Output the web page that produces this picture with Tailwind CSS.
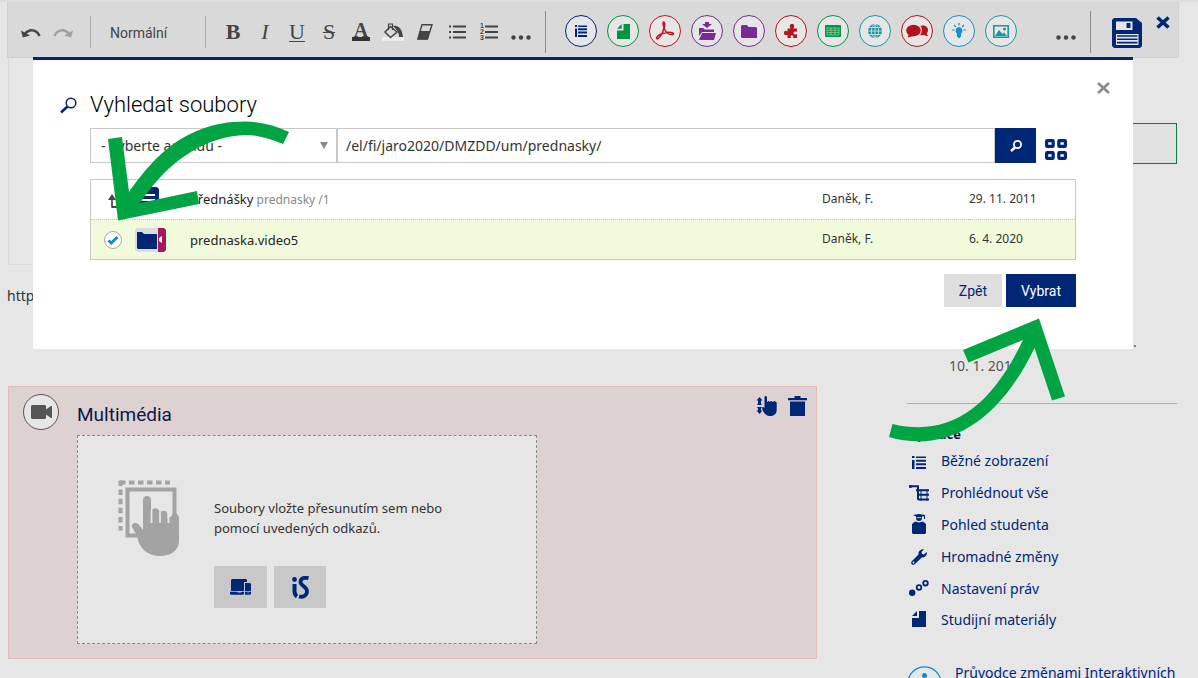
<!DOCTYPE html>
<html lang="cs">
<head>
<meta charset="utf-8">
<meta name="viewport" content="width=device-width, initial-scale=1">
<title>Vyhledat soubory</title>
<script src="https://cdn.jsdelivr.net/npm/@tailwindcss/browser@4"></script>
</head>
<body class="relative h-screen overflow-hidden border-t-2 border-[#dedede] bg-[#e6e6e6] font-['Noto_Sans','Open_Sans',sans-serif] text-sm text-[#333]">

<!-- Editor toolbar -->
<header class="mr-[19px] ml-[7px] flex h-14 border border-t-0 border-[#d0d0d0] bg-[#d9d9d9] pl-[7px] pr-2 text-[#444]">
  <div class="flex h-[60px] items-center">
    <button aria-label="Zpět" class="flex w-8 justify-center pt-1"><svg width="20" height="12" viewBox="0 0 20 12"><path d="M3.5 6.5C8 .5 15.500 1 18.500 8" fill="none" stroke="#444" stroke-width="2.500"/><path d="M0 2.500 1.800 9.500 9 7.500Z" fill="#444"/></svg></button>
    <button aria-label="Znovu" class="flex w-8 justify-center pt-1"><svg width="20" height="12" viewBox="0 0 20 12"><path d="M16.500 6.500C12 .5 4.500 1 1.500 8" fill="none" stroke="#a0a0a0" stroke-width="2.500"/><path d="M20 2.500 18.200 9.500 11 7.500Z" fill="#a0a0a0"/></svg></button>
    <span class="ml-[11px] h-8 w-px bg-[#b0b0b0]"></span>
    <select aria-label="Styl odstavce" class="w-[114px] appearance-none pt-[2px] pl-[19px] font-[Roboto,sans-serif] text-sm text-[#444]"><option>Normální</option></select>
    <span class="h-8 w-px bg-[#b0b0b0]"></span>
    <div class="ml-[11px] flex items-center font-['Liberation_Serif',serif] text-[22px] leading-8">
      <button aria-label="Tučné" class="w-8 font-bold">B</button>
      <button aria-label="Kurzíva" class="w-8 italic">I</button>
      <button aria-label="Podtržené" class="w-8 underline decoration-1 underline-offset-2">U</button>
      <button aria-label="Přeškrtnuté" class="w-8 line-through decoration-1">S</button>
      <button aria-label="Barva textu" class="flex w-8 justify-center"><span class="h-[18px] w-[18px] border-b-4 border-[#333] text-[20px] leading-[14px] font-bold">A</span></button>
      <button aria-label="Barva pozadí" class="flex w-8 justify-center"><svg width="22" height="18" viewBox="0 0 22 18"><path d="M0 14h22v4H0z" fill="#ececec"/><path d="M8.500 3.500 15 9 8.500 14.500 3 9Z" fill="none" stroke="#444" stroke-width="1.500"/><path d="M6.500 7V1h4v6" fill="none" stroke="#444" stroke-width="1.200"/><path d="M11 3c5-1 9 2 10 11h-4c0-4-1-6-6-11Z" fill="#444"/></svg></button>
      <button aria-label="Odstranit formátování" class="flex w-8 justify-center"><svg width="16" height="16" viewBox="0 0 16 16"><path d="M5 .7h10L10.500 15H.8Z" fill="#d9d9d9" stroke="#444" stroke-width="1.400"/><path d="M3.200 7h9.600L10.500 15.500H.5Z" fill="#444"/></svg></button>
      <button aria-label="Odrážky" class="flex w-8 justify-center"><svg width="18" height="16" viewBox="0 0 18 16" fill="#444"><path d="M5 1.500h13v2H5zM5 7h13v2H5zM5 12.500h13v2H5zM1 1.500h2v2H1zM1 7h2v2H1zM1 12.500h2v2H1z"/></svg></button>
      <button aria-label="Číslování" class="flex w-8 justify-center gap-px font-['Liberation_Sans',sans-serif] text-[7px] leading-[6px] font-bold"><span class="flex w-1 flex-col"><span>1</span><span>2</span><span>3</span></span><svg width="13" height="18" viewBox="0 0 13 18" fill="#444"><path d="M0 2.500h13v2H0zM0 8h13v2H0zM0 13.500h13v2H0z"/></svg></button>
      <button aria-label="Další formátování" class="flex w-8 justify-center pt-[10px]"><svg width="20" height="5" viewBox="0 0 20 5" fill="#444"><circle cx="2.500" cy="2.500" r="2.200"/><circle cx="10" cy="2.500" r="2.200"/><circle cx="17.500" cy="2.500" r="2.200"/></svg></button>
    </div>
    <span class="ml-2 h-[42px] w-px bg-[#8c8c8c]"></span>
  </div>

  <div class="ml-[19px] flex h-[58px] items-center gap-[10px]">
    <button aria-label="Text" class="grid size-8 place-items-center rounded-full border border-[#002776] bg-[#e6e6e6] text-[#002776]"><svg width="12" height="12" viewBox="0 0 12 12" fill="currentColor"><path d="M0 0h2v2H0zM0 3.500h2V12H0zM3 .5h9V2H3zM3 3.300h9v2H3zM3 6.500h9v2H3zM3 10h9v2H3z"/></svg></button>
    <button aria-label="Soubor" class="grid size-8 place-items-center rounded-full border border-[#009640] bg-[#e6e6e6] text-[#009640]"><svg width="13" height="15" viewBox="0 0 14 16" fill="currentColor"><path d="M7 0h7v16H0V7h7ZM5 0v5H0Z"/></svg></button>
    <button aria-label="PDF" class="grid size-8 place-items-center rounded-full border border-[#c0141c] bg-[#e6e6e6] text-[#c0141c]"><svg width="20" height="20" viewBox="0 0 20 20" fill="none" stroke="currentColor" stroke-width="1.500"><path d="M9 1c-2 0-.5 5 1 8 2 3.500 5 5 8 4.500 2-1.500-2-2.500-6-2-5 .5-10 3-10.500 5.500 0 2 3 .5 5.500-4.500C9 8 10.500 2 9 1Z"/></svg></button>
    <button aria-label="Vložit do složky" class="grid size-8 place-items-center rounded-full border border-[#7a2b93] bg-[#e6e6e6] text-[#7a2b93]"><svg width="18" height="18" viewBox="0 0 18 18" fill="currentColor"><path d="M7 0h4v2h3L9 6 4 2h3zM1 6h4l2 1.500h9V10H4l-3 4zM4 11h14l-2 7H1Z"/></svg></button>
    <button aria-label="Složka" class="grid size-8 place-items-center rounded-full border border-[#7a2b93] bg-[#e6e6e6] text-[#7a2b93]"><svg width="16" height="13" viewBox="0 0 16 13" fill="currentColor"><path d="M1 0h5l1.500 2H15l1 1v10H1L0 12V1Z"/></svg></button>
    <button aria-label="Doplněk" class="grid size-8 place-items-center rounded-full border border-[#b5121b] bg-[#e6e6e6] text-[#b5121b]"><svg width="15" height="15" viewBox="0 0 15 15" fill="currentColor"><path d="M3.500 4.500h3.200C5 2 6 0 8 0s3 2 1.300 4.500H13v3.300c-2.500-1-3.500 0-3.500 1.200s1 2 3.500 1.200V14H9c1-2-.2-2.800-1.200-2.800S6 12 7 14H3.500v-3.500C1.500 12 0 11 0 9s1.500-3 3.500-1.500Z"/></svg></button>
    <button aria-label="Tabulka" class="grid size-8 place-items-center rounded-full border border-[#009640] bg-[#e6e6e6] text-[#009640]"><svg width="16" height="12" viewBox="0 0 16 12"><rect width="16" height="12" rx="1" fill="currentColor"/><path d="M2 3h12M2 5.300h12M2 7.600h12M2 10h12M2 2.500V10M6 2.500V10M10 2.500V10M14 2.500V10" stroke="#9fd3b2" stroke-width=".7"/></svg></button>
    <button aria-label="Web" class="grid size-8 place-items-center rounded-full border border-[#1797a0] bg-[#e6e6e6] text-[#1797a0]"><svg width="14" height="14" viewBox="0 0 14 14"><circle cx="7" cy="7" r="7" fill="currentColor"/><path d="M7 0v14M0 7h14M1 3.500h12M1 10.500h12" stroke="#e6e6e6" stroke-width=".8"/><ellipse cx="7" cy="7" rx="3.600" ry="6.500" fill="none" stroke="#e6e6e6" stroke-width=".8"/></svg></button>
    <button aria-label="Diskuse" class="grid size-8 place-items-center rounded-full border border-[#b5121b] bg-[#e6e6e6] text-[#b5121b]"><svg width="22" height="14" viewBox="0 0 22 14" fill="currentColor"><ellipse cx="7.500" cy="6.500" rx="7.300" ry="5.800"/><path d="M3 10 1.500 13.500 8 12ZM14.500 2c4-1.500 7.500 1 7.500 4 0 2-.8 3-1.500 3.800L22 12c-2 0-3-.5-4-1l-4 .2C16.500 8 16.500 4.500 14.500 2Z"/></svg></button>
    <button aria-label="Nápověda" class="grid size-8 place-items-center rounded-full border border-[#0f8fd0] bg-[#e6e6e6] text-[#0f8fd0]"><svg width="14" height="16" viewBox="0 0 14 16"><path d="M7 4a3.600 3.600 0 0 1 2.200 6.300L9 13.500 7 15.500 5 13.500l-.2-3.200A3.600 3.600 0 0 1 7 4Z" fill="currentColor"/><path d="M7 0v2.500M2 2l2 2M12 2l-2 2M0 7h2.500M11.500 7H14" stroke="currentColor" stroke-width="1.200"/></svg></button>
    <button aria-label="Obrázek" class="grid size-8 place-items-center rounded-full border border-[#1797a0] bg-[#e6e6e6] text-[#1797a0]"><svg width="16" height="13" viewBox="0 0 16 13" fill="currentColor"><path d="M.8.800h14.400v11.400H.8Z" fill="none" stroke="currentColor" stroke-width="1.600"/><path d="m2 11 4-6 3.500 4L11 7.500 14 11Z"/><circle cx="11.500" cy="4" r="1.500"/></svg></button>
  </div>

  <div class="ml-auto flex h-[60px] items-center">
    <button aria-label="Další" class="flex w-8 justify-center pt-[10px]"><svg width="20" height="5" viewBox="0 0 20 5" fill="#444"><circle cx="2.500" cy="2.500" r="2.200"/><circle cx="10" cy="2.500" r="2.200"/><circle cx="17.500" cy="2.500" r="2.200"/></svg></button>
    <span class="ml-2 h-[42px] w-px bg-[#8c8c8c]"></span>
    <button aria-label="Uložit" class="ml-[21px] pt-[2px]"><svg class="block" width="30" height="30" viewBox="0 0 30 30"><path d="M2 0h22l6 5v23l-2 2H2l-2-2V2Z" fill="#002776"/><path d="M4 3.500h16.500v8.500H4z" fill="#e6e6e6"/><path d="M14.500 5h4v5h-4z" fill="#002776"/><path d="M4 16h22.500v11H4z" fill="#e6e6e6"/><path d="M5 18h20.500M5 21.300h20.500M5 24.600h20.500" stroke="#002776" stroke-width="1.600"/></svg></button>
    <button aria-label="Zavřít editor" class="mt-[14px] ml-[14px] self-start"><svg class="block" width="14" height="13" viewBox="0 0 14 13"><path d="m1.500 1.500 11 10m0-10-11 10" stroke="#002776" stroke-width="3.600"/></svg></button>
  </div>
</header>

<!-- Page content -->
<main class="mr-[21px] ml-2 grid grid-cols-[1fr_270px] gap-[90px]">
  <div>
    <div class="h-[207px] border border-t-0 border-[#d8d8d8]"></div>
    <p class="-ml-px pt-[21px] leading-5">https</p>
    <section class="mt-20 border border-[#e3bcbc] bg-[#ddd1d1] pb-[14px]">
      <div class="flex h-12 items-start pt-[7px] pr-[9px] pl-[14px]">
        <span class="grid size-9 place-items-center rounded-full border border-[#555] bg-[#e6e6e6]"><svg width="21" height="14" viewBox="0 0 21 14" fill="#555"><path d="M1 0h13l1 1v3.500L20 1h1v12h-1l-5-3.500V13l-1 1H1l-1-1V1Z"/></svg></span>
        <h2 class="ml-[18px] pt-[7px] font-[Roboto,sans-serif] text-[19px] leading-7 text-[#0c1847]">Multimédia</h2>
        <button aria-label="Přesunout" class="mt-[2px] ml-auto"><svg class="block" width="21" height="20" viewBox="0 0 21 20" fill="#002776"><path d="M3.500 1 6.500 4.500H5v3L6 9H1l1-1.500v-3H.5ZM1 11h5l-1 1.500v2h1.500l-3 3.500-3-3.500H2v-2ZM8.500 1C8.500-.5 11 0 11 1.500V6h.5c0-1.500 2-1.500 2 0h.6c0-1.500 2-1.500 2 0h.6c0-1.500 4-1 4 1v7c0 3.500-2.500 6-6 6-4 0-6.200-1.500-8.500-7-.5-2 1.300-3 2.300-1Z"/></svg></button>
        <button aria-label="Smazat" class="mt-[2px] ml-[11px]"><svg class="block" width="19" height="20" viewBox="0 0 19 20" fill="#002776"><path d="M0 2h6.500V0h6v2H19v2.200H0ZM2 5.500h15V20H2Z"/></svg></button>
      </div>
      <div class="ml-[68px] flex w-[460px] gap-[33px] border border-dashed border-[#8a8a8a] bg-[#e6e6e6] pt-11 pb-[35px] pl-10">
        <svg class="shrink-0" width="63" height="78" viewBox="0 0 63 78" fill="#a3a3a3"><path d="M2 2.500h50" stroke="#a3a3a3" stroke-width="4" stroke-dasharray="5.500 3.500"/><path d="M2.500 .5v50" stroke="#a3a3a3" stroke-width="4" stroke-dasharray="5.500 3.600"/><path d="M9.500 9.500h47v46h-47z" fill="none" stroke="#a3a3a3" stroke-width="4"/><path d="M25 20c0-5.500 8-5.500 8 0v12c1-5 8-5 8.500 0v2c1-4.500 7.500-4.500 8 0v5l4-3c1-4 7.500-3 7.500 2v23c0 9-8 15-19 15-13 0-21-8-23-20l-5-9c-1-4 5-6 8-1l3 4Z"/><path d="M33.500 30v13M42 32v11M50.500 34v9" stroke="#e6e6e6" stroke-width="1.800"/></svg>
        <div class="pt-[18px]">
          <p class="w-[240px] text-[13px] leading-5">Soubory vložte přesunutím sem nebo pomocí uvedených odkazů.</p>
          <div class="mt-7 flex gap-[7px]">
            <button aria-label="Z počítače" class="grid h-[42px] w-[53px] place-items-center bg-[#c8c8c8]"><svg width="21" height="16" viewBox="0 0 21 16" fill="#002776"><path d="M1 1 2 0h14l1 1v2h-3v9H1ZM0 12.800h7l1 .8h3l1-.8h2V15l-1 .8H1L0 15ZM15 4h5l1 1v7h-6ZM15 12.800h6V15l-1 .8h-5Z"/><path d="M17.500 13.500h1v1h-1z" fill="#c8c8c8"/></svg></button>
            <button aria-label="Z informačního systému" class="grid h-[42px] w-[52px] place-items-center bg-[#c8c8c8]"><svg width="17" height="23" viewBox="0 0 17 23" fill="none" stroke="#002776"><circle cx="2.500" cy="3.500" r="2.400" fill="#002776" stroke="none"/><path d="M2.500 8v7c0 3 1 4.500 2.500 5.500" stroke-width="4"/><path d="M16.500 2.200C12 1 8.500 2.500 8.500 6s6.500 4.500 6.500 9-4 6.500-8 5.500" stroke-width="3.800"/></svg></button>
          </div>
        </div>
      </div>
    </section>
  </div>

  <aside>
    <div class="mt-[65px] h-[41px] border border-[#008040] bg-[#e1e1e1]"></div>
    <div class="mt-[168px] pl-[42px] text-[#555]">
      <p class="pl-[184px] leading-5">.</p>
      <p class="pt-[3px] leading-[22px]">10. 1. 2019</p>
    </div>
    <hr class="mt-[26px] border-[#b0b0b0]">
    <h3 class="mt-5 text-[13px] leading-5 font-bold text-[#0c1847]">Operace</h3>
    <nav class="mt-[1px] flex flex-col text-[#002776]">
      <a href="#" class="flex h-8 items-center gap-[10px]"><span class="grid w-6 place-items-center pt-[2px]"><svg width="14" height="13" viewBox="0 0 14 13" fill="currentColor"><path d="M0 0h2.500v2H0zM0 4h2.500v9H0zM4 .5h10V2H4zM4 3.800h10v2H4zM4 7.300h10v2H4zM4 11h10v2H4z"/></svg></span>Běžné zobrazení</a>
      <a href="#" class="flex h-8 items-center gap-[10px]"><span class="grid w-6 place-items-center"><svg width="20" height="16" viewBox="0 0 20 16"><path d="M0 1.200h9v13.500M7 5.200h13M9 9.700h11M9 14.500h11" fill="none" stroke="currentColor" stroke-width="2"/><circle cx="1.500" cy="1.500" r="1.500" fill="currentColor"/><path d="M12 4v12M18 4v12" stroke="currentColor"/></svg></span>Prohlédnout vše</a>
      <a href="#" class="flex h-8 items-center gap-[10px]"><span class="grid w-6 place-items-center pb-[2px]"><svg width="14" height="20" viewBox="0 0 14 20" fill="currentColor"><path d="m1 1 6-1 6 1v4h-1V2.300L10 2.600V4c0 2-1 3-3 3S4 6 4 4V2.600ZM0 10l3-2.500 4 1 4-1 3 2.500v9l-1 1H1l-1-1Z"/><path d="M4.500 3.600h5" stroke="#e6e6e6" stroke-width=".8"/></svg></span>Pohled studenta</a>
      <a href="#" class="flex h-8 items-center gap-[10px]"><span class="grid w-6 place-items-center"><svg width="16" height="16" viewBox="0 0 16 16" fill="currentColor"><path fill-rule="evenodd" d="M13 .3 10.500 3l.5 2 2 .5L15.800 3c.7 3-1.500 6-5 5.500L4 15c-1 1-2.500 1-3.300.2S0 13 1 12l6.500-6.500C7 2 10 0 13 .3ZM2.500 12.600a.9.9 0 1 0 .01 1.800.9.9 0 0 0 0-1.800Z"/></svg></span>Hromadné změny</a>
      <a href="#" class="flex h-8 items-center gap-[10px]"><span class="grid w-6 place-items-center pb-[2px]"><svg width="20" height="16" viewBox="0 0 20 16" fill="none" stroke="currentColor" stroke-width="1.800"><circle cx="3.200" cy="12.700" r="3.200" fill="currentColor" stroke="none"/><circle cx="10" cy="7.500" r="2.300"/><circle cx="16.500" cy="3.200" r="2.300"/></svg></span>Nastavení práv</a>
      <a href="#" class="flex h-[30px] items-center gap-[10px]"><span class="grid w-6 place-items-center pb-[2px]"><svg width="14" height="16" viewBox="0 0 14 16" fill="currentColor"><path d="M7 0h7v16H0V7h7ZM5 0v5H0Z"/></svg></span>Studijní materiály</a>
    </nav>
    <a href="#" class="mt-7 flex gap-[13px] whitespace-nowrap text-[#002776]">
      <svg class="mt-[3px] shrink-0" width="35" height="35" viewBox="0 0 35 35"><circle cx="17.500" cy="17.500" r="16.700" fill="none" stroke="#0f8fd0" stroke-width="1.300"/><circle cx="17.500" cy="9.500" r="2.500" fill="#0f8fd0"/><path d="M15 14h5v13h-5z" fill="#0f8fd0"/></svg>
      <span class="leading-5">Průvodce změnami Interaktivních</span>
    </a>
  </aside>
</main>

<!-- File picker dialog -->
<div role="dialog" aria-labelledby="dlg" class="absolute top-[55px] right-[65px] left-[33px] border-t-[3px] border-[#002776] bg-white px-[57px] pb-[42px]">
  <button aria-label="Zavřít" class="absolute top-[22px] right-[23px]"><svg class="block" width="13" height="12" viewBox="0 0 13 12"><path d="m1 1 11 10m0-10L1 11" stroke="#8a8a8a" stroke-width="2.600"/></svg></button>
  <div class="-ml-[30px] flex items-center gap-[13px] pt-[29px]">
    <svg width="17" height="17" viewBox="0 0 17 17" fill="none" stroke="#002776"><circle cx="11" cy="6" r="4.800" stroke-width="1.500"/><path d="M7.500 9.500 1 15.500" stroke-width="2.600"/></svg>
    <h1 id="dlg" class="font-[Roboto,sans-serif] text-[22px] leading-8 font-light text-black">Vyhledat soubory</h1>
  </div>
  <form class="mt-[7px] -mr-[2px] flex h-[35px]">
    <div class="relative w-[247px] shrink-0">
      <select aria-label="Agenda" class="h-full w-full appearance-none border border-[#c8c8c8] bg-white pl-[10px] text-sm"><option>- Vyberte agendu -</option></select>
      <svg class="pointer-events-none absolute top-[14px] right-[9px]" width="8" height="7" viewBox="0 0 8 7"><path d="M0 0h8L4 7Z" fill="#888"/></svg>
    </div>
    <input aria-label="Cesta" value="/el/fi/jaro2020/DMZDD/um/prednasky/" class="min-w-0 flex-1 border border-[#c8c8c8] px-2 text-sm">
    <button type="button" aria-label="Hledat" class="grid w-[41px] place-items-center bg-[#002776]"><svg width="12" height="12" viewBox="0 0 12 12" fill="none" stroke="#fff"><circle cx="7.500" cy="4.500" r="3.600" stroke-width="1.800"/><path d="M5 7.500 1 11" stroke-width="2.400"/></svg></button>
    <button type="button" aria-label="Dlaždice" class="mt-[11px] mr-[11px] ml-[9px] self-start"><svg class="block" width="22" height="22" viewBox="0 0 22 22" fill="none" stroke="#002776" stroke-width="3.200"><rect x="1.600" y="1.600" width="6.600" height="5.800" rx=".6"/><rect x="13.800" y="1.600" width="6.600" height="5.800" rx=".6"/><rect x="1.600" y="13.600" width="6.600" height="5.800" rx=".6"/><rect x="13.800" y="13.600" width="6.600" height="5.800" rx=".6"/></svg></button>
  </form>
  <div class="mt-4 border border-[#c8c8c8]">
    <table class="w-full table-fixed text-left">
      <colgroup><col class="w-[44px]"><col class="w-[55px]"><col><col class="w-[147px]"><col class="w-[106px]"></colgroup>
      <tbody class="text-xs">
        <tr class="h-[39px]">
          <td class="border-b border-dotted border-[#c8c8c8] pt-1 pl-4"><svg class="block" width="18" height="14" viewBox="0 0 18 14"><path d="M5 2v11h12" fill="none" stroke="#111" stroke-width="1.300"/><path d="m1 6 4-6 4 6Z" fill="#444"/></svg></td>
          <td class="border-b border-dotted border-[#c8c8c8]"><svg class="block" width="25" height="24" viewBox="0 0 25 24"><path d="M2 0h20l2 2v22H0V2Z" fill="#002776"/><path d="M4 8h16M4 13h16" stroke="#fff" stroke-width="1.800"/></svg></td>
          <td class="border-b border-dotted border-[#c8c8c8]"><span class="text-[13px] text-[#222]">Přednášky</span> <span class="text-xs text-[#888]">prednasky /1</span></td>
          <td class="border-b border-dotted border-[#c8c8c8]">Daněk, F.</td>
          <td class="border-b border-dotted border-[#c8c8c8]">29. 11. 2011</td>
        </tr>
        <tr class="h-10 bg-[#f1fbdb]">
          <td class="pt-[2px] pl-[13px]"><button aria-label="Vybráno" class="grid size-[18px] place-items-center rounded-full border border-[#a8a8a8] bg-white"><svg width="12" height="10" viewBox="0 0 12 10"><path d="m1.500 5.500 2.800 2.500L10.500 2" fill="none" stroke="#0f8fc4" stroke-width="3"/></svg></button></td>
          <td class="pt-[2px]"><svg class="block" width="31" height="24" viewBox="0 0 31 24"><path d="M2 0h22v24H2l-2-2V2Z" fill="#dcdcdc"/><path d="M23 0h6l2 2v20l-2 2h-6Z" fill="#a3195b"/><path d="M27 8v7l-3-2v-3Z" fill="#fff"/><path d="M2 4h5l2 2h13v15H3l-1-1Z" fill="#002776"/></svg></td>
          <td class="pt-[2px] text-[13px] text-[#222]">prednaska.video5</td>
          <td>Daněk, F.</td>
          <td>6. 4. 2020</td>
        </tr>
      </tbody>
    </table>
  </div>
  <div class="mt-[14px] flex justify-end gap-1 font-[Roboto,sans-serif] text-sm">
    <button class="h-[33px] w-[58px] bg-[#dedede] text-[#002776]">Zpět</button>
    <button class="h-[33px] w-[70px] bg-[#002776] text-white">Vybrat</button>
  </div>
</div>

<!-- Tutorial arrows -->
<svg class="pointer-events-none absolute top-[118px] left-[107px]" width="183" height="103" viewBox="107 120 183 103" aria-hidden="true"><path fill="#00a443" d="M108 139 122 137 129 192C148 166 180 121 246 121.500 262 122 276 126 289 132L283 144C271 139 258 135 246 135 205 136 168 161 140 203L197 191 199 204 118 220.500Z"/></svg>
<svg class="pointer-events-none absolute top-[316px] left-[888px]" width="178" height="126" viewBox="888 318 178 126" aria-hidden="true"><path fill="#00a443" d="M892.500 424C943 436 987 416 1023 340L968.500 362.500 963 350 1039 318.500 1065 396.500 1052 400.500 1034.500 348C995 430 940 452 889 437Z"/></svg>
</body>
</html>
